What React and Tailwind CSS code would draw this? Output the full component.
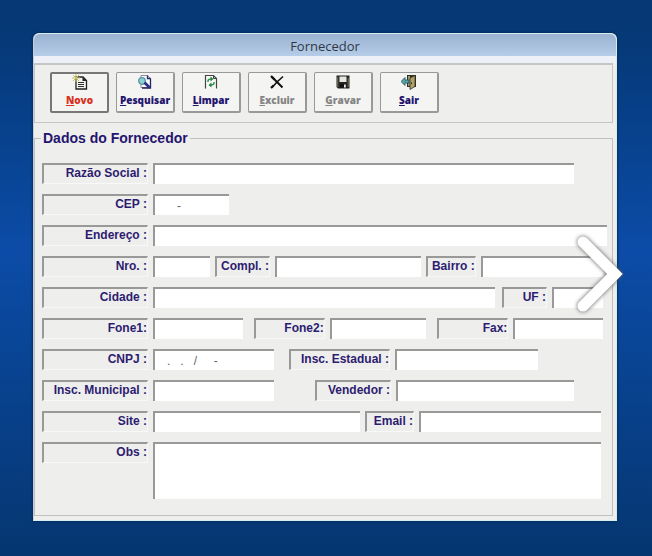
import React from 'react';
import clsx from 'clsx';

// --- Icons ---
const NewIcon = () => (
    <svg className="w-4 h-4" viewBox="0 0 16 16" fill="none">
        <path d="M4 3h7l3.500 3.500v8.500H4z" fill="#f2f2ee" stroke="#222" strokeWidth="1.3" />
        <path d="M10.5 3V7H14.5z" fill="#222" />
        <path d="M6 8.500h6M6 10.500h6M6 12.500h6" stroke="#333" />
        <path d="M4 0v8M0 4h8M1 1l6 6M7 1L1 7" stroke="#c8c069" />
    </svg>
);
const SearchIcon = () => (
    <svg className="w-4 h-4" viewBox="0 0 16 16" fill="none">
        <path d="M4 1.5h6.5l3 3v9H4z" fill="#fafafa" stroke="#8a8aa0" />
        <path d="M10.5 1.5v3h3M13.5 4.5v9.5H5" stroke="#252560" strokeWidth="1.3" />
        <circle cx="5" cy="7" r="3.3" fill="#8fd0d3" stroke="#5c95a8" strokeWidth="1.3" />
        <path d="M7.5 8.5l5 5" stroke="#2a2a90" strokeWidth="2.6" />
    </svg>
);
const RefreshIcon = () => (
    <svg className="w-4 h-4" viewBox="0 0 16 16" fill="none">
        <path d="M2.5 14.5v-13h8l3 3v10" fill="#f8f8f8" stroke="#444" strokeWidth="1.2" />
        <path d="M10.5 1.5v3h3" stroke="#444" />
        <path d="M5 8V7q0-2 3-2M11 8v1q0 2-3 2" stroke="#2f9a4c" strokeWidth="1.5" />
        <path d="M7.5 2.5L10.5 5l-3 2.5zM8.5 8.5L5.5 11l3 2.5z" fill="#23803e" />
    </svg>
);
const DeleteIcon = () => (
    <svg className="w-4 h-4" viewBox="0 0 16 16" fill="none">
        <path d="M3 3l10.5 10.5" stroke="#111" strokeWidth="2" />
        <path d="M14 2.5L8 8l-5 5.5" stroke="#111" strokeWidth="1.6" />
        <path d="M2 2l3.5 3.5M2 14l2.5-2.5" stroke="#111" strokeWidth="2.2" />
    </svg>
);
const SaveIcon = () => (
    <svg className="w-4 h-4" viewBox="0 0 16 16">
        <path d="M1.5 1.5h13v13H3l-1.5-1.5z" fill="#222" />
        <path d="M4.5 2.5h7V8h-7z" fill="#e6e6e0" />
        <path d="M2.8 3v10M13.2 4v9" stroke="#77775a" />
        <path d="M5 10h6v3.5H5z" fill="#111" />
        <path d="M9 10.5h1.8v3H9z" fill="#eee" />
    </svg>
);
const ExitIcon = () => (
    <svg className="w-4 h-4" viewBox="0 0 16 16">
        <path d="M6 1h9v12H6z" fill="#2f2f22" />
        <path d="M7 2h2v10H7z" fill="#9a9a72" />
        <path d="M9 4l5-2.5v11L9 15.5z" fill="#b0a169" stroke="#333326" strokeWidth=".8" />
        <path d="M10.5 8.5v1.5" stroke="#222" />
        <path d="M0 7.5L4 3.5V6h4v3H4v2.5z" fill="#55a5a8" stroke="#254c55" strokeWidth=".8" />
    </svg>
);

const ACTIONS = [
    { label: 'Novo', Icon: NewIcon, tone: 'text-[#d8321f]', focused: true },
    { label: 'Pesquisar', Icon: SearchIcon, tone: 'text-[#24146e]' },
    { label: 'Limpar', Icon: RefreshIcon, tone: 'text-[#24146e]' },
    { label: 'Excluir', Icon: DeleteIcon, tone: 'text-[#858585]', disabled: true },
    { label: 'Gravar', Icon: SaveIcon, tone: 'text-[#858585]', disabled: true },
    { label: 'Sair', Icon: ExitIcon, tone: 'text-[#24146e]' },
];

const sunken = 'border-t-2 border-l-2 border-t-[#999] border-l-[#999]';

function ToolButton({ label, Icon, tone, focused, disabled }) {
    return (
        <button
            type="button"
            disabled={disabled}
            className={clsx(
                'w-[59px] h-[41px] flex flex-col items-center rounded-xs bg-[#f4f4f3] font-["Open_Sans",sans-serif] text-[10px] leading-5 font-extrabold',
                focused ? 'border-2 border-[#777]' : 'pt-px border border-[#999] border-r-2 border-b-2',
                tone
            )}
        >
            <Icon />
            <span><u>{label[0]}</u>{label.slice(1)}</span>
        </button>
    );
}

function Label({ id, className = 'w-[106px]', children }) {
    return (
        <label
            htmlFor={id}
            className={clsx('h-[21px] shrink-0 text-right text-[12px] leading-4 font-bold text-[#2d1c70] whitespace-nowrap border-r border-b border-r-[#f8f8f8] border-b-[#f8f8f8]', sunken, className)}
        >
            {children}
        </label>
    );
}

function Field({ id, className, value }) {
    return (
        <input
            id={id}
            type="text"
            defaultValue={value}
            className={clsx('h-[21px] min-w-0 bg-white px-0.5 text-[12px] text-[#666] outline-none', sunken, className)}
        />
    );
}

function Row({ className, children }) {
    return <div className={clsx('flex items-start gap-[5px]', className)}>{children}</div>;
}

function App() {
    return (
        <div className='relative min-h-screen pt-[33px] pb-[35px] pl-[33px] pr-[35px] bg-linear-to-b from-[#053875] from-5% via-[#0c4ca8] via-45% to-[#053670] font-["Liberation_Sans",Arial,sans-serif]'>
            <main className="rounded-t-md border border-[#d5eef5] border-l-[#c5cde0] bg-[#eeeeed] pr-[3px] pb-1 shadow-[0_0_2px_1px_#06305c]">
                <h1 className='-mr-[3px] h-[22px] rounded-t-md bg-linear-to-b from-[#9bb2d1] to-[#b5cde8] text-center text-[13px] leading-6 text-[#303848] font-["Open_Sans",sans-serif]'>
                    Fornecedor
                </h1>
                <div className="-mr-[3px] h-[7px] bg-[#edf1f7]" />
                <div className="flex flex-wrap gap-[7px] border border-[#c5c5c5] border-t-2 px-[15px] pt-[7px] pb-[9px]">
                    {ACTIONS.map(action => <ToolButton key={action.label} {...action} />)}
                </div>

                <form>
                    <fieldset className="mt-[5px] min-w-0 flex flex-col gap-2.5 border border-[#c0c0c0] pl-[7px] pr-[5px] pt-[15px] pb-4">
                        <legend className="-ml-px px-0.5 text-[14px] leading-5 font-bold text-[#24146e]">Dados do Fornecedor</legend>
                        <Row className="pr-[33px]">
                            <Label id="razao">Razão Social :</Label>
                            <Field id="razao" className="flex-1" />
                        </Row>
                        <Row>
                            <Label id="cep">CEP :</Label>
                            <Field id="cep" className="w-[76px]" value="      -" />
                        </Row>
                        <Row>
                            <Label id="endereco">Endereço :</Label>
                            <Field id="endereco" className="flex-1" />
                        </Row>
                        <Row className="pr-1">
                            <Label id="nro">Nro. :</Label>
                            <Field id="nro" className="w-[57px]" />
                            <Label id="compl" className="w-[55px]">Compl. :</Label>
                            <Field id="compl" className="flex-[6]" />
                            <Label id="bairro" className="w-[50px]">Bairro :</Label>
                            <Field id="bairro" className="flex-[5]" />
                        </Row>
                        <Row className="pr-1">
                            <Label id="cidade">Cidade :</Label>
                            <Field id="cidade" className="flex-1" />
                            <Label id="uf" className="w-[45px] ml-0.5">UF :</Label>
                            <Field id="uf" className="w-[51px]" />
                        </Row>
                        <Row className="pr-1">
                            <Label id="fone1">Fone1:</Label>
                            <Field id="fone1" className="flex-[12]" />
                            <Label id="fone2" className="w-[71px] ml-1.5">Fone2:</Label>
                            <Field id="fone2" className="flex-[13]" />
                            <Label id="fax" className="w-[71px] ml-1.5">Fax:</Label>
                            <Field id="fax" className="flex-[12]" />
                        </Row>
                        <Row>
                            <Label id="cnpj">CNPJ :</Label>
                            <Field id="cnpj" className="w-[121px]" value="   .   .   /     -" />
                            <Label id="estadual" className="w-[101px] ml-2.5">Insc. Estadual :</Label>
                            <Field id="estadual" className="w-[143px]" />
                        </Row>
                        <Row className="pr-[33px]">
                            <Label id="municipal">Insc. Municipal :</Label>
                            <Field id="municipal" className="w-[121px]" />
                            <Label id="vendedor" className="w-[76px] ml-auto">Vendedor :</Label>
                            <Field id="vendedor" className="w-[178px]" />
                        </Row>
                        <Row className="pr-1.5">
                            <Label id="site">Site :</Label>
                            <Field id="site" className="flex-[8]" />
                            <Label id="email" className="w-[49px]">Email :</Label>
                            <Field id="email" className="flex-[7]" />
                        </Row>
                        <Row className="pr-1.5">
                            <Label id="obs">Obs :</Label>
                            <textarea id="obs" className={clsx('h-[57px] min-w-0 flex-1 resize-none bg-white px-0.5 text-[12px] outline-none', sunken)} />
                        </Row>
                    </fieldset>
                </form>
            </main>

            <div className="absolute top-0 bottom-2 right-[24px] flex items-center">
                <button type="button" aria-label="Próximo">
                    <svg className="w-[60px] h-[90px] drop-shadow-[0_0_2px_#555]" viewBox="0 0 60 90" fill="none">
                        <path d="M15 13l32 32-32 32" stroke="#fff" strokeWidth="11" strokeLinecap="round" />
                    </svg>
                </button>
            </div>
        </div>
    );
}

export default App;
